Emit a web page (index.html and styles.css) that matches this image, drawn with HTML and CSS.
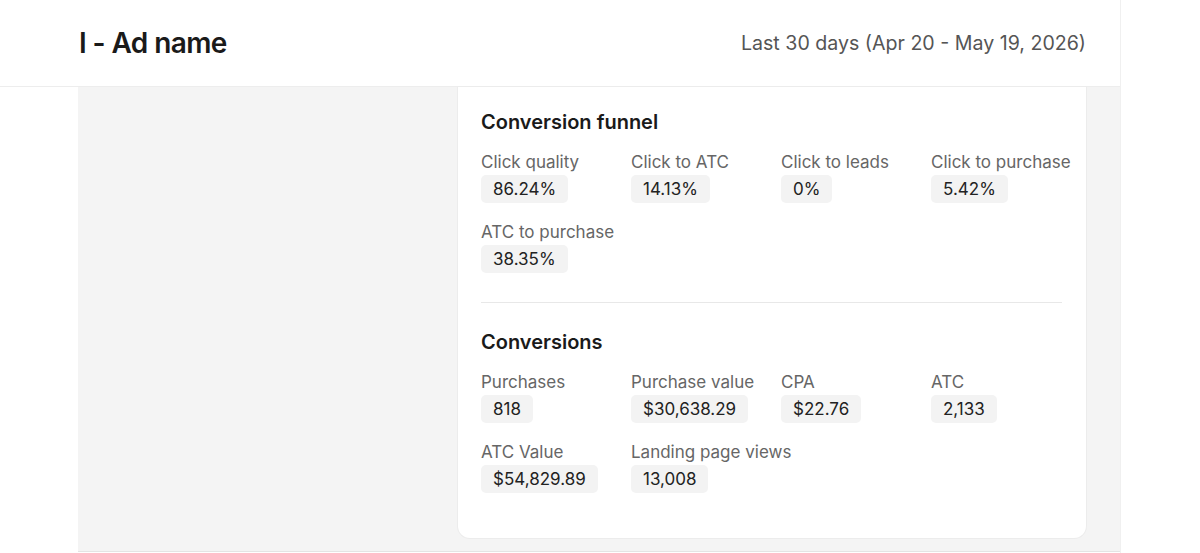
FILE: index.html
```html
<!doctype html>
<html>
    <head>
        <meta charset="utf-8">
        <meta name="viewport" content="width=device-width, initial-scale=1.0">
        <title>Ad report</title>
        <link rel="stylesheet" href="styles.css">
    </head>
    <body>
        <div class="page">
            <div class="topbar">
                <h1 class="adtitle">I - Ad name</h1>
                <div class="range">Last 30 days (Apr 20 - May 19, 2026)</div>
            </div>
            <div class="content">
                <div class="card">
                    <h2 class="section">Conversion funnel</h2>
                    <div class="stats">
                        <div class="stat"><div class="label">Click quality</div><span class="value">86.24%</span></div>
                        <div class="stat"><div class="label">Click to ATC</div><span class="value">14.13%</span></div>
                        <div class="stat"><div class="label">Click to leads</div><span class="value">0%</span></div>
                        <div class="stat"><div class="label">Click to purchase</div><span class="value">5.42%</span></div>
                        <div class="stat"><div class="label">ATC to purchase</div><span class="value">38.35%</span></div>
                    </div>
                    <hr class="divider">
                    <h2 class="section">Conversions</h2>
                    <div class="stats">
                        <div class="stat"><div class="label">Purchases</div><span class="value">818</span></div>
                        <div class="stat"><div class="label">Purchase value</div><span class="value">$30,638.29</span></div>
                        <div class="stat"><div class="label">CPA</div><span class="value">$22.76</span></div>
                        <div class="stat"><div class="label">ATC</div><span class="value">2,133</span></div>
                        <div class="stat"><div class="label">ATC Value</div><span class="value">$54,829.89</span></div>
                        <div class="stat"><div class="label">Landing page views</div><span class="value">13,008</span></div>
                    </div>
                </div>
            </div>
        </div>
    </body>
</html>
```

FILE: styles.css
```css
body {
    margin: 0;
    background: #fff;
    font-family: Inter, "Liberation Sans", sans-serif;
    color: #1c1c1c;
}
.page {
    width: 1121px;
    height: 553px;
    border-right: 1px solid #f0f0f0;
    box-sizing: border-box;
    display: flex;
    flex-direction: column;
}
.topbar {
    height: 87px;
    padding: 0 34px 0 79px;
    box-sizing: border-box;
    display: flex;
    align-items: center;
    justify-content: space-between;
    border-bottom: 1px solid #ededed;
}
.adtitle {
    margin: 0;
    font-size: 28px;
    font-weight: 600;
    letter-spacing: -0.6px;
    color: #1a1a1a;
}
.range {
    font-size: 19.6px;
    color: #555;
}
.content {
    margin-left: 78px;
    height: 465px;
    background: #f4f4f4;
    border-bottom: 1px solid #e4e4e4;
    padding-left: 380px;
    padding-right: 34px;
    box-sizing: border-box;
}
.card {
    background: #fff;
    border-radius: 0 0 12px 12px;
    box-shadow: 0 0 0 1px #ececec;
    padding: 23px 24px 45px 23px;
    height: 451px;
    box-sizing: border-box;
}
.section {
    margin: 0;
    font-size: 20px;
    line-height: 24px;
    font-weight: 600;
    color: #1a1a1a;
}
.stats {
    margin-top: 17px;
    display: grid;
    grid-template-columns: repeat(4, 150px);
    row-gap: 18px;
}
.label {
    font-size: 17px;
    line-height: 22px;
    color: #666;
    white-space: nowrap;
}
.value {
    display: inline-block;
    margin-top: 2px;
    padding: 0 12px;
    line-height: 28px;
    font-size: 17px;
    color: #222;
    background: #f3f3f3;
    border-radius: 5px;
}
.divider {
    margin: 29px 0 27px;
    border: none;
    border-top: 1px solid #e8e8e8;
}
```
